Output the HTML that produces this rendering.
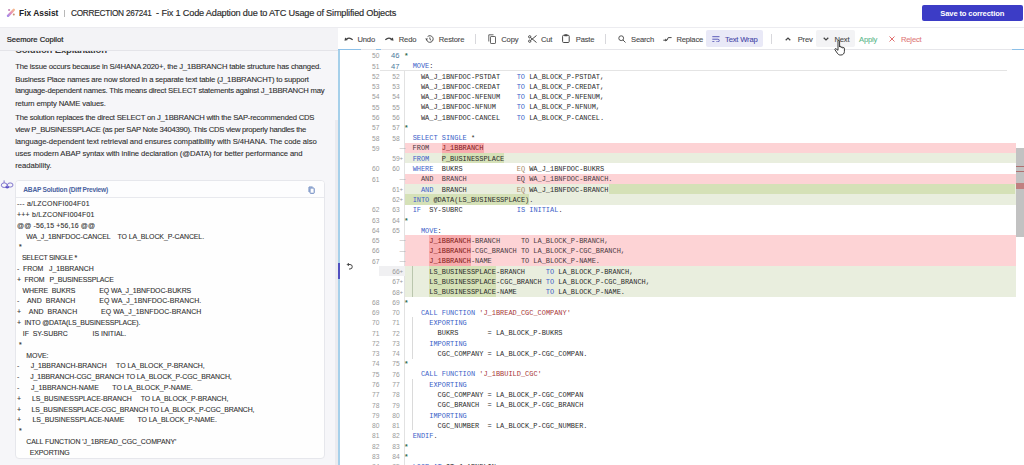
<!DOCTYPE html>
<html><head><meta charset="utf-8">
<style>
*{margin:0;padding:0;box-sizing:border-box}
html,body{width:1024px;height:465px;overflow:hidden;background:#fff;font-family:"Liberation Sans",sans-serif;color:#333}
.abs{position:absolute}
/* top header */
#hdr{position:absolute;z-index:5;left:0;top:0;width:1024px;height:28px;background:#fff;border-bottom:1px solid #ececf0}
#brand{position:absolute;left:18.6px;top:7.2px;font-size:9.9px;font-weight:bold;color:#222;white-space:nowrap;transform:scaleX(0.85);transform-origin:0 0}
#sep1{position:absolute;left:64px;top:10px;width:1px;height:7px;background:#b8b8b8}
#title{position:absolute;left:70.8px;top:7.9px;font-size:9.2px;color:#2a2a2a;letter-spacing:-0.31px;white-space:nowrap;-webkit-text-stroke:0.15px #2a2a2a}
#save{position:absolute;left:921.5px;top:4.6px;width:101.5px;height:16px;background:#3c3cc6;border-radius:2px;color:#fff;font-weight:bold;font-size:7.6px;letter-spacing:-0.13px;text-align:center;line-height:17px}
/* left panel */
#left{position:absolute;left:0;top:27px;width:338px;height:438px;background:#f6f6f9;overflow:hidden}
#lhdr{position:absolute;left:0;top:1px;width:338px;height:23px;background:#f3f3f6;border-bottom:1px solid #e4e4e9;z-index:2}
#lhdr span{position:absolute;left:6.7px;top:6.8px;font-size:7.6px;color:#222;white-space:nowrap;letter-spacing:0.01px;-webkit-text-stroke:0.2px #222}
#solh{position:absolute;left:15.5px;top:17px;font-size:9.6px;font-weight:bold;color:#3c3c3c;letter-spacing:-0.2px;white-space:nowrap}
.para{position:absolute;left:15.2px;font-size:7.7px;line-height:10px;color:#2e2e2e;white-space:pre;-webkit-text-stroke:0.1px #2e2e2e}
#card{position:absolute;left:14.8px;top:153.2px;width:310px;height:279.3px;background:#fefefe;border:1px solid #e6e7ec;border-radius:4px;overflow:hidden}
#cardh{position:absolute;left:0;top:0;width:100%;height:17px;border-bottom:1px solid #e8e9ee;background:#fdfdfe}
#cardh span{position:absolute;left:7.5px;top:4.6px;font-size:6.6px;font-weight:bold;color:#4a62a0;letter-spacing:-0.22px;white-space:nowrap}
#diff{position:absolute;left:1.6px;top:18px;transform:scaleX(0.88);transform-origin:0 0}
.dl{position:absolute;left:0;white-space:pre;font-size:7.9px;color:#333;line-height:10px;-webkit-text-stroke:0.12px #333}
.u{letter-spacing:-1.1px}

/* toolbar */
#tb{position:absolute;left:338px;top:27px;width:686px;height:22.5px;background:#fff;border-bottom:1px solid #e6e6ea}
.tbt{position:absolute;top:8px;font-size:7.6px;color:#484848;white-space:nowrap;letter-spacing:-0.17px;-webkit-text-stroke:0.1px currentColor}
.tsep{position:absolute;top:6.5px;width:1px;height:10px;background:#d8d8dc}
.ico{position:absolute}
/* editor */
#ed{position:absolute;left:338px;top:49.5px;width:686px;height:415.5px;background:#fff}
#edl{position:absolute;left:337.8px;top:49.5px;width:2px;height:415.5px;background:#a6d0ea}
.rbg{position:absolute;left:404.6px;width:611px;height:10.26px}
.rbg.del{background:#fdd3d5}
.rbg.add{background:#e9eede}
.hl{position:absolute;height:10.26px}
.hl.delh{background:#f8abad}
.hl.addh{background:#d5e1b7}
.gl{position:absolute;width:1px;background:#e2e2e2}
.ig{position:absolute;width:1px;background:#c8d0c0}
.ghov{position:absolute;left:378.5px;width:26px;height:10.26px;background:#f0f0f2}
.row{position:absolute;left:0;height:10.26px;width:1024px;line-height:10.26px;white-space:pre}
.ln1{position:absolute;left:355.6px;top:0.9px;width:23.9px;text-align:right;font-size:6.7px;color:#9a9a9a;font-family:"Liberation Sans",sans-serif}
.ln2{position:absolute;left:375.4px;top:0.9px;width:24.4px;text-align:right;font-size:6.7px;color:#9a9a9a;font-family:"Liberation Sans",sans-serif}
.sticky .ln2{font-size:7.6px;color:#4d7a9c;letter-spacing:0.2px}
.mk{position:absolute;left:399.6px;width:5px;font-size:6px;color:#999;text-align:left}
.code{position:absolute;top:0.6px;left:404.3px;font-family:"Liberation Mono",monospace;font-size:6.949px;color:#2c2c2c}
.kw{color:#3c5fc8}
.eq{color:#a88a6a}
.st{color:#a83838}
.cm{color:#2e6b4e;font-weight:bold;position:relative;top:0.2px}
.pu{color:#333}
.drow .code{color:#4b3a42}
.dh{color:#801818}
#sticksh{position:absolute;left:379.5px;top:70px;width:627px;height:1px;background:#e4e4e4}
#vscr{position:absolute;left:1015.5px;top:147.5px;width:8.5px;height:89.5px;background:#c2c2c2}
</style></head>
<body>
<!-- header -->
<div id="hdr">
  <svg class="ico" style="left:4px;top:6px" width="14" height="14" viewBox="0 0 14 14">
    <defs><linearGradient id="lg" x1="0" y1="1" x2="1" y2="0"><stop offset="0" stop-color="#a68ae8"/><stop offset="0.5" stop-color="#e890b8"/><stop offset="1" stop-color="#f4b890"/></linearGradient></defs>
    <path d="M4 9.8 L9.8 3.8" stroke="url(#lg)" stroke-width="2.4" fill="none" stroke-linecap="round"/>
    <circle cx="5.1" cy="4" r="1.1" fill="#c888b8"/><circle cx="9.8" cy="8.6" r="1" fill="#c89070"/>
  </svg>
  <div id="brand">Fix Assist</div>
  <div id="sep1"></div>
  <div id="title" style="transform:scaleX(0.9);transform-origin:0 0">CORRECTION</div><div id="title" style="left:125.6px;transform:scaleX(0.885);transform-origin:0 0">267241</div><div id="title" style="left:156px">-</div><div id="title" style="left:161.5px;letter-spacing:-0.196px">Fix 1 Code Adaption due to ATC Usage of Simplified Objects</div>
  <div id="save">Save to correction</div>
</div>

<!-- left panel -->
<div id="left">
  <div id="lhdr"><span>Seemore Copilot</span></div>
  <div id="solh">Solution Explanation</div>
  <div class="para" style="top:35.20px;letter-spacing:-0.188px">The issue occurs because in S/4HANA 2020+, the J_1BBRANCH table structure has changed.</div>
<div class="para" style="top:47.50px;letter-spacing:-0.181px">Business Place names are now stored in a separate text table (J_1BBRANCHT) to support</div>
<div class="para" style="top:59.30px;letter-spacing:-0.223px">language-dependent names. This means direct SELECT statements against J_1BBRANCH may</div>
<div class="para" style="top:71.50px;letter-spacing:-0.137px">return empty NAME values.</div>
<div class="para" style="top:86.20px;letter-spacing:-0.228px">The solution replaces the direct SELECT on J_1BBRANCH with the SAP-recommended CDS</div>
<div class="para" style="top:98.30px;letter-spacing:-0.279px">view P_BUSINESSPLACE (as per SAP Note 3404390). This CDS view properly handles the</div>
<div class="para" style="top:110.40px;letter-spacing:-0.059px">language-dependent text retrieval and ensures compatibility with S/4HANA. The code also</div>
<div class="para" style="top:122.40px;letter-spacing:-0.083px">uses modern ABAP syntax with inline declaration (@DATA) for better performance and</div>
<div class="para" style="top:134.40px;letter-spacing:-0.010px">readability.</div>
  <svg class="ico" style="left:0px;top:152px" width="14" height="11" viewBox="0 0 14 11">
    <g fill="none" stroke="#7468c8" stroke-width="0.9">
      <ellipse cx="4.2" cy="6.2" rx="2.9" ry="2.3"/><ellipse cx="10.2" cy="6" rx="2.8" ry="2.1"/>
      <path d="M4.1 3.9 V1.4"/>
    </g>
    <ellipse cx="7.2" cy="8.3" rx="2" ry="1.1" fill="#5c50c8"/>
  </svg>
  <div id="card">
    <div id="cardh"><span>ABAP Solution (Diff Preview)</span>
      <svg class="ico" style="left:292px;top:5px" width="7" height="8" viewBox="0 0 7 8"><g fill="none" stroke="#5878b8" stroke-width="0.9"><rect x="2" y="2" width="4.2" height="5.3" rx="0.6"/><path d="M1 6 V1 H4.6"/></g></svg>
    </div>
    <div id="diff">
<div class="dl" style="top:0.00px;letter-spacing:0.289px">--- a/LZCONFI004F01</div>
<div class="dl" style="top:10.81px;letter-spacing:0.268px">+++ b/LZCONFI004F01</div>
<div class="dl" style="top:21.62px;letter-spacing:0.188px">@@ -56,15 +56,16 @@</div>
<div class="dl" style="top:32.43px;letter-spacing:-0.093px">     WA_J_1BNFDOC-CANCEL    TO LA_BLOCK_P-CANCEL.</div>
<div class="dl" style="top:43.24px;letter-spacing:0.000px"> *</div>
<div class="dl" style="top:54.05px;letter-spacing:-0.301px">   SELECT SINGLE *</div>
<div class="dl" style="top:64.86px;letter-spacing:-0.045px">-  FROM   J_1BBRANCH</div>
<div class="dl" style="top:75.67px;letter-spacing:-0.176px">+  FROM   P_BUSINESSPLACE</div>
<div class="dl" style="top:86.48px;letter-spacing:-0.090px">   WHERE  BUKRS             EQ WA_J_1BNFDOC-BUKRS</div>
<div class="dl" style="top:97.29px;letter-spacing:0.064px">-    AND  BRANCH            EQ WA_J_1BNFDOC-BRANCH.</div>
<div class="dl" style="top:108.10px;letter-spacing:0.070px">+    AND  BRANCH            EQ WA_J_1BNFDOC-BRANCH</div>
<div class="dl" style="top:118.91px;letter-spacing:-0.155px">+  INTO @DATA(LS_BUSINESSPLACE).</div>
<div class="dl" style="top:129.72px;letter-spacing:-0.024px">   IF  SY-SUBRC             IS INITIAL.</div>
<div class="dl" style="top:140.53px;letter-spacing:0.000px"> *</div>
<div class="dl" style="top:151.34px;letter-spacing:-0.066px">     MOVE:</div>
<div class="dl" style="top:162.15px;letter-spacing:-0.042px">-      J_1BBRANCH-BRANCH     TO LA_BLOCK_P-BRANCH,</div>
<div class="dl" style="top:172.96px;letter-spacing:-0.122px">-      J_1BBRANCH-CGC_BRANCH TO LA_BLOCK_P-CGC_BRANCH,</div>
<div class="dl" style="top:183.77px;letter-spacing:0.021px">-      J_1BBRANCH-NAME       TO LA_BLOCK_P-NAME.</div>
<div class="dl" style="top:194.58px;letter-spacing:-0.104px">+      LS_BUSINESSPLACE-BRANCH     TO LA_BLOCK_P-BRANCH,</div>
<div class="dl" style="top:205.39px;letter-spacing:-0.189px">+      LS_BUSINESSPLACE-CGC_BRANCH TO LA_BLOCK_P-CGC_BRANCH,</div>
<div class="dl" style="top:216.20px;letter-spacing:-0.040px">+      LS_BUSINESSPLACE-NAME       TO LA_BLOCK_P-NAME.</div>
<div class="dl" style="top:227.01px;letter-spacing:0.000px"> *</div>
<div class="dl" style="top:237.82px;letter-spacing:-0.077px">     CALL FUNCTION &#x27;J_1BREAD_CGC_COMPANY&#x27;</div>
<div class="dl" style="top:248.63px;letter-spacing:-0.120px">       EXPORTING</div>
    </div>
  </div>
  <div class="abs" style="left:334.8px;top:93px;width:3px;height:345px;background:#ebebef"></div>
</div>

<!-- toolbar -->
<div id="tb">
  <!-- undo -->
  <svg class="ico" style="left:5.5px;top:9.3px" width="9" height="5" viewBox="0 0 9 5"><path d="M2.4 3.3 Q5.3 0.6 8.6 3.8" fill="none" stroke="#404040" stroke-width="1.2"/><path d="M0.5 4.7 L1.1 1.5 L3.9 3.9 Z" fill="#404040"/></svg>
  <div class="tbt" style="left:19.5px">Undo</div>
  <svg class="ico" style="left:46.8px;top:9.3px" width="9" height="5" viewBox="0 0 9 5"><path d="M6.6 3.3 Q3.7 0.6 0.4 3.8" fill="none" stroke="#404040" stroke-width="1.2"/><path d="M8.5 4.7 L7.9 1.5 L5.1 3.9 Z" fill="#404040"/></svg>
  <div class="tbt" style="left:60.8px">Redo</div>
  <svg class="ico" style="left:86.8px;top:7.8px" width="9" height="8" viewBox="0 0 9 8"><g fill="none" stroke="#484848" stroke-width="0.95"><path d="M1.6 4.6 A3.3 3.3 0 1 0 2.6 1.6"/><path d="M4.9 2.4 V4.3 L6.2 5.3"/></g><path d="M0.2 3.4 L3 3.4 L1.6 5.6 Z" fill="#484848"/></svg>
  <div class="tbt" style="left:100.8px">Restore</div>
  <div class="tsep" style="left:137.3px"></div>
  <svg class="ico" style="left:150px;top:6.5px" width="8" height="10" viewBox="0 0 8 10"><g fill="none" stroke="#555" stroke-width="0.9"><rect x="2.5" y="2.5" width="5" height="7" rx="0.6"/><path d="M0.8 7.5 V0.8 H5.5"/></g></svg>
  <div class="tbt" style="left:163.3px">Copy</div>
  <svg class="ico" style="left:189.5px;top:7.6px" width="9" height="8" viewBox="0 0 9 8"><g fill="none" stroke="#484848" stroke-width="1"><circle cx="1.7" cy="1.8" r="1.15"/><circle cx="1.7" cy="6.2" r="1.15"/><path d="M2.6 2.6 L8.5 7.5 M2.6 5.4 L8.5 0.5"/></g></svg>
  <div class="tbt" style="left:203px">Cut</div>
  <svg class="ico" style="left:224.3px;top:7.3px" width="8" height="9" viewBox="0 0 8 9"><g fill="none" stroke="#484848" stroke-width="1"><rect x="0.6" y="1.3" width="6.6" height="7.2" rx="1"/></g><rect x="2.3" y="0.3" width="3.2" height="2" rx="0.5" fill="#484848"/></svg>
  <div class="tbt" style="left:237.8px">Paste</div>
  <div class="tsep" style="left:266.8px"></div>
  <svg class="ico" style="left:280px;top:7.5px" width="8" height="8" viewBox="0 0 8 8"><g fill="none" stroke="#555" stroke-width="1"><circle cx="3.2" cy="3.2" r="2.4"/><path d="M5 5 L7.5 7.5"/></g></svg>
  <div class="tbt" style="left:293px">Search</div>
  <svg class="ico" style="left:324.5px;top:8.8px" width="9" height="6" viewBox="0 0 9 6"><g fill="none" stroke="#484848" stroke-width="1"><path d="M0.3 4.2 H4 L5.2 1.6 H8.6"/></g><path d="M2.2 2.6 L4.2 4.2 L2.2 5.6 Z" fill="#484848"/></svg>
  <div class="tbt" style="left:338.4px">Replace</div>
  <div class="abs" style="left:368.3px;top:3.3px;width:57.2px;height:16.7px;background:#e9e9f7;border-radius:2px"></div>
  <svg class="ico" style="left:373.6px;top:8.6px" width="8" height="6.5" viewBox="0 0 8 6.5"><g fill="none" stroke="#5a5ab8" stroke-width="1"><path d="M0.3 0.7 H7.5 M0.3 3.2 H5.9 A1.35 1.35 0 0 1 5.9 5.9 H4.2 M0.3 5.7 H2.4"/></g></svg>
  <div class="tbt" style="left:387px;color:#4646a8">Text Wrap</div>
  <div class="tsep" style="left:433.3px"></div>
  <svg class="ico" style="left:447.4px;top:9.5px" width="6" height="4" viewBox="0 0 6 4"><path d="M0.7 3.3 L3 1.1 L5.3 3.3" fill="none" stroke="#444" stroke-width="1.25"/></svg>
  <div class="tbt" style="left:459.7px">Prev</div>
  <div class="abs" style="left:478.2px;top:3px;width:38.4px;height:17px;background:#f3f3f5;border-radius:2px"></div>
  <svg class="ico" style="left:485px;top:9.5px" width="6" height="4" viewBox="0 0 6 4"><path d="M0.7 0.8 L3 3 L5.3 0.8" fill="none" stroke="#444" stroke-width="1.25"/></svg>
  <div class="tbt" style="left:496.4px">Next</div>
  <div class="tbt" style="left:521px;color:#5cb88c">Apply</div>
  <svg class="ico" style="left:550.6px;top:8.5px" width="6" height="6" viewBox="0 0 6 6"><path d="M0.5 0.5 L5.5 5.5 M5.5 0.5 L0.5 5.5" fill="none" stroke="#e07070" stroke-width="1"/></svg>
  <div class="tbt" style="left:563px;color:#e07878">Reject</div>
</div>

<!-- editor -->
<div id="ed"></div>
<div class="rbg del" style="top:142.90px"></div>
<div class="hl delh" style="top:142.90px;left:441.83px;width:41.70px"></div>
<div class="rbg add" style="top:153.17px"></div>
<div class="hl addh" style="top:153.17px;left:441.83px;width:62.55px"></div>
<div class="rbg del" style="top:173.71px"></div>
<div class="rbg add" style="top:183.98px"></div>
<div class="hl addh" style="top:183.98px;left:608.63px;width:406.87px"></div>
<div class="rbg add" style="top:194.25px"></div>
<div class="hl addh" style="top:194.25px;left:404.30px;width:125.10px"></div>
<div class="rbg del" style="top:235.33px"></div>
<div class="hl delh" style="top:235.33px;left:429.32px;width:41.70px"></div>
<div class="rbg del" style="top:245.60px"></div>
<div class="hl delh" style="top:245.60px;left:429.32px;width:41.70px"></div>
<div class="rbg del" style="top:255.87px"></div>
<div class="hl delh" style="top:255.87px;left:429.32px;width:41.70px"></div>
<div class="rbg add" style="top:266.14px"></div>
<div class="hl addh" style="top:266.14px;left:429.32px;width:66.72px"></div>
<div class="rbg add" style="top:276.41px"></div>
<div class="hl addh" style="top:276.41px;left:429.32px;width:66.72px"></div>
<div class="rbg add" style="top:286.68px"></div>
<div class="hl addh" style="top:286.68px;left:429.32px;width:66.72px"></div>
<div class="gl" style="left:403.70px;top:71.01px;height:393.99px"></div>
<div class="ig" style="left:412.34px;top:266.14px;height:30.81px;background:#bac6ad"></div>
<div class="ig" style="left:412.34px;top:317.49px;height:41.08px;background:#dadada"></div>
<div class="ig" style="left:412.34px;top:379.11px;height:51.35px;background:#dadada"></div>
<div class="ghov" style="top:266.14px"></div>
<div class="row sticky" style="top:50.47px"><span class="ln1">50</span><span class="ln2">46</span><span class="mk"></span><span class="code"><span class="cm">*</span></span></div>
<div class="row sticky" style="top:60.74px"><span class="ln1">51</span><span class="ln2">47</span><span class="mk"></span><span class="code">  <span class="kw">MOVE</span>:</span></div>
<div class="row" style="top:71.01px"><span class="ln1">52</span><span class="ln2">52</span><span class="mk"></span><span class="code">    WA_J_1BNFDOC-PSTDAT    <span class="kw">TO</span> LA_BLOCK_P-PSTDAT<span class="pu">,</span></span></div>
<div class="row" style="top:81.28px"><span class="ln1">53</span><span class="ln2">53</span><span class="mk"></span><span class="code">    WA_J_1BNFDOC-CREDAT    <span class="kw">TO</span> LA_BLOCK_P-CREDAT<span class="pu">,</span></span></div>
<div class="row" style="top:91.55px"><span class="ln1">54</span><span class="ln2">54</span><span class="mk"></span><span class="code">    WA_J_1BNFDOC-NFENUM    <span class="kw">TO</span> LA_BLOCK_P-NFENUM<span class="pu">,</span></span></div>
<div class="row" style="top:101.82px"><span class="ln1">55</span><span class="ln2">55</span><span class="mk"></span><span class="code">    WA_J_1BNFDOC-NFNUM     <span class="kw">TO</span> LA_BLOCK_P-NFNUM<span class="pu">,</span></span></div>
<div class="row" style="top:112.09px"><span class="ln1">56</span><span class="ln2">56</span><span class="mk"></span><span class="code">    WA_J_1BNFDOC-CANCEL    <span class="kw">TO</span> LA_BLOCK_P-CANCEL<span class="pu">.</span></span></div>
<div class="row" style="top:122.36px"><span class="ln1">57</span><span class="ln2">57</span><span class="mk"></span><span class="code"><span class="cm">*</span></span></div>
<div class="row" style="top:132.63px"><span class="ln1">58</span><span class="ln2">58</span><span class="mk"></span><span class="code">  <span class="kw">SELECT</span> <span class="kw">SINGLE</span> *</span></div>
<div class="row drow" style="top:142.90px"><span class="ln1">59</span><span class="ln2"></span><span class="mk">&#8212;</span><span class="code">  FROM   <span class="dh">J_1BBRANCH</span></span></div>
<div class="row" style="top:153.17px"><span class="ln1"></span><span class="ln2">59</span><span class="mk">+</span><span class="code">  <span class="kw">FROM</span>   P_BUSINESSPLACE</span></div>
<div class="row" style="top:163.44px"><span class="ln1">60</span><span class="ln2">60</span><span class="mk"></span><span class="code">  <span class="kw">WHERE</span>  BUKRS             <span class="eq">EQ</span> WA_J_1BNFDOC-BUKRS</span></div>
<div class="row drow" style="top:173.71px"><span class="ln1">61</span><span class="ln2"></span><span class="mk">&#8212;</span><span class="code">    AND  BRANCH            EQ WA_J_1BNFDOC-BRANCH.</span></div>
<div class="row" style="top:183.98px"><span class="ln1"></span><span class="ln2">61</span><span class="mk">+</span><span class="code">    <span class="kw">AND</span>  BRANCH            <span class="eq">EQ</span> WA_J_1BNFDOC-BRANCH</span></div>
<div class="row" style="top:194.25px"><span class="ln1"></span><span class="ln2">62</span><span class="mk">+</span><span class="code">  <span class="kw">INTO</span> @DATA<span class="pu">(</span>LS_BUSINESSPLACE<span class="pu">)</span><span class="pu">.</span></span></div>
<div class="row" style="top:204.52px"><span class="ln1">62</span><span class="ln2">63</span><span class="mk"></span><span class="code">  <span class="kw">IF</span>  SY-SUBRC             <span class="kw">IS</span> <span class="kw">INITIAL</span><span class="pu">.</span></span></div>
<div class="row" style="top:214.79px"><span class="ln1">63</span><span class="ln2">64</span><span class="mk"></span><span class="code"><span class="cm">*</span></span></div>
<div class="row" style="top:225.06px"><span class="ln1">64</span><span class="ln2">65</span><span class="mk"></span><span class="code">    <span class="kw">MOVE</span>:</span></div>
<div class="row drow" style="top:235.33px"><span class="ln1">65</span><span class="ln2"></span><span class="mk">&#8212;</span><span class="code">      <span class="dh">J_1BBRANCH</span>-BRANCH     TO LA_BLOCK_P-BRANCH,</span></div>
<div class="row drow" style="top:245.60px"><span class="ln1">66</span><span class="ln2"></span><span class="mk">&#8212;</span><span class="code">      <span class="dh">J_1BBRANCH</span>-CGC_BRANCH TO LA_BLOCK_P-CGC_BRANCH,</span></div>
<div class="row drow" style="top:255.87px"><span class="ln1">67</span><span class="ln2"></span><span class="mk">&#8212;</span><span class="code">      <span class="dh">J_1BBRANCH</span>-NAME       TO LA_BLOCK_P-NAME.</span></div>
<div class="row" style="top:266.14px"><span class="ln1"></span><span class="ln2">66</span><span class="mk">+</span><span class="code">      LS_BUSINESSPLACE-BRANCH     <span class="kw">TO</span> LA_BLOCK_P-BRANCH<span class="pu">,</span></span></div>
<div class="row" style="top:276.41px"><span class="ln1"></span><span class="ln2">67</span><span class="mk">+</span><span class="code">      LS_BUSINESSPLACE-CGC_BRANCH <span class="kw">TO</span> LA_BLOCK_P-CGC_BRANCH<span class="pu">,</span></span></div>
<div class="row" style="top:286.68px"><span class="ln1"></span><span class="ln2">68</span><span class="mk">+</span><span class="code">      LS_BUSINESSPLACE-NAME       <span class="kw">TO</span> LA_BLOCK_P-NAME<span class="pu">.</span></span></div>
<div class="row" style="top:296.95px"><span class="ln1">68</span><span class="ln2">69</span><span class="mk"></span><span class="code"><span class="cm">*</span></span></div>
<div class="row" style="top:307.22px"><span class="ln1">69</span><span class="ln2">70</span><span class="mk"></span><span class="code">    <span class="kw">CALL</span> <span class="kw">FUNCTION</span> <span class="st">&#x27;J_1BREAD_CGC_COMPANY&#x27;</span></span></div>
<div class="row" style="top:317.49px"><span class="ln1">70</span><span class="ln2">71</span><span class="mk"></span><span class="code">      <span class="kw">EXPORTING</span></span></div>
<div class="row" style="top:327.76px"><span class="ln1">71</span><span class="ln2">72</span><span class="mk"></span><span class="code">        BUKRS       = LA_BLOCK_P-BUKRS</span></div>
<div class="row" style="top:338.03px"><span class="ln1">72</span><span class="ln2">73</span><span class="mk"></span><span class="code">      <span class="kw">IMPORTING</span></span></div>
<div class="row" style="top:348.30px"><span class="ln1">73</span><span class="ln2">74</span><span class="mk"></span><span class="code">        CGC_COMPANY = LA_BLOCK_P-CGC_COMPAN<span class="pu">.</span></span></div>
<div class="row" style="top:358.57px"><span class="ln1">74</span><span class="ln2">75</span><span class="mk"></span><span class="code"><span class="cm">*</span></span></div>
<div class="row" style="top:368.84px"><span class="ln1">75</span><span class="ln2">76</span><span class="mk"></span><span class="code">    <span class="kw">CALL</span> <span class="kw">FUNCTION</span> <span class="st">&#x27;J_1BBUILD_CGC&#x27;</span></span></div>
<div class="row" style="top:379.11px"><span class="ln1">76</span><span class="ln2">77</span><span class="mk"></span><span class="code">      <span class="kw">EXPORTING</span></span></div>
<div class="row" style="top:389.38px"><span class="ln1">77</span><span class="ln2">78</span><span class="mk"></span><span class="code">        CGC_COMPANY = LA_BLOCK_P-CGC_COMPAN</span></div>
<div class="row" style="top:399.65px"><span class="ln1">78</span><span class="ln2">79</span><span class="mk"></span><span class="code">        CGC_BRANCH  = LA_BLOCK_P-CGC_BRANCH</span></div>
<div class="row" style="top:409.92px"><span class="ln1">79</span><span class="ln2">80</span><span class="mk"></span><span class="code">      <span class="kw">IMPORTING</span></span></div>
<div class="row" style="top:420.19px"><span class="ln1">80</span><span class="ln2">81</span><span class="mk"></span><span class="code">        CGC_NUMBER  = LA_BLOCK_P-CGC_NUMBER<span class="pu">.</span></span></div>
<div class="row" style="top:430.46px"><span class="ln1">81</span><span class="ln2">82</span><span class="mk"></span><span class="code">  <span class="kw">ENDIF</span><span class="pu">.</span></span></div>
<div class="row" style="top:440.73px"><span class="ln1">82</span><span class="ln2">83</span><span class="mk"></span><span class="code"><span class="cm">*</span></span></div>
<div class="row" style="top:451.00px"><span class="ln1">83</span><span class="ln2">84</span><span class="mk"></span><span class="code"><span class="cm">*</span></span></div>
<div class="row" style="top:461.27px"><span class="ln1">84</span><span class="ln2">85</span><span class="mk"></span><span class="code">  <span class="kw">LOOP</span> <span class="kw">AT</span> IT_J_1BNFLIN</span></div>
<div id="sticksh"></div>
<div id="edl"></div>
<div class="abs" style="left:338px;top:49px;width:23px;height:1.3px;background:#8cc0e8"></div>
<div class="abs" style="left:376px;top:49px;width:5px;height:1.3px;background:#8cc0e8"></div>
<div class="abs" style="left:1012px;top:49px;width:12px;height:1.3px;background:#8cc0e8"></div>
<div class="abs" style="left:338px;top:263px;width:2.4px;height:16.4px;background:#5050c0"></div>
<svg class="ico" style="left:346px;top:262px" width="7" height="8" viewBox="0 0 7 8"><g fill="none" stroke="#444" stroke-width="1"><path d="M1.5 2.5 H4 A2.2 2.2 0 0 1 4 7 H3"/><path d="M2.8 1 L1.3 2.5 L2.8 4"/></g></svg>
<div id="vscr"></div>
<div class="abs" style="left:1016px;top:165.5px;width:8px;height:1px;background:#b07070"></div>
<div class="abs" style="left:1016px;top:170.5px;width:8px;height:1px;background:#b07070"></div>
<div class="abs" style="left:1016px;top:183px;width:8px;height:5.5px;background:#c08080"></div>
<!-- cursor -->
<svg class="ico" style="left:834px;top:40px" width="13" height="16" viewBox="0 0 13 16">
  <path d="M4 1.2 C4 0.4 5.6 0.4 5.6 1.2 V7 C5.6 6.2 7.2 6.2 7.2 7 V7.6 C7.2 6.8 8.8 6.8 8.8 7.6 V8.2 C8.8 7.4 10.4 7.4 10.4 8.2 V11.5 C10.4 13.6 9 15 7 15 H6.2 C4.8 15 4 14.2 3.2 13 L1 9.8 C0.5 9 1.3 8.3 2 8.8 L4 10.3 Z" fill="#fff" stroke="#222" stroke-width="0.9"/>
</svg>
</body></html>
